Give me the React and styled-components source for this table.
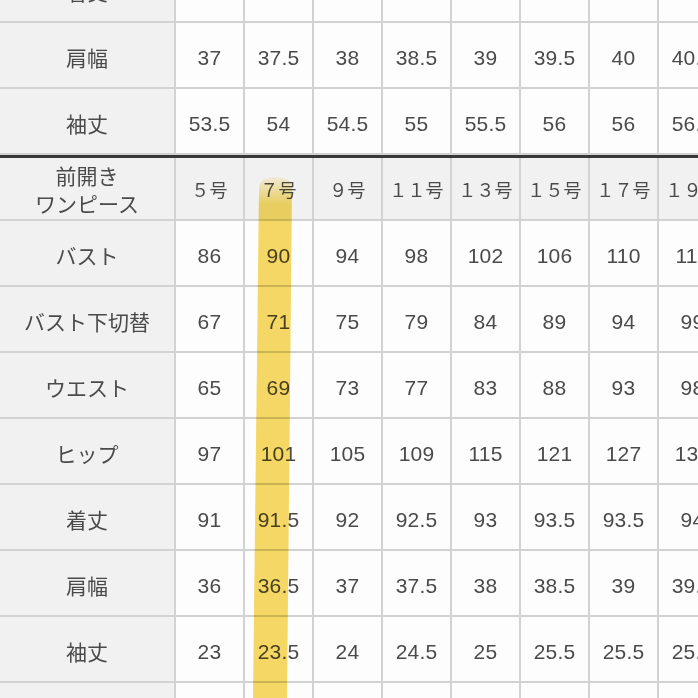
import React from "react";
import styled, { createGlobalStyle } from "styled-components";

const Global = createGlobalStyle`
  html, body { margin: 0; padding: 0; background: #ffffff; }
  body { font-family: "Liberation Sans", "Noto Sans CJK JP", sans-serif; }
`;

const Viewport = styled.div`
  position: relative;
  width: 698px;
  height: 698px;
  overflow: hidden;
  background: #ffffff;
`;

const Table = styled.div`
  display: grid;
  grid-template-columns: 176px repeat(8, 69px);
  margin-top: -43px;
  width: max-content;
`;

const Cell = styled.div`
  box-sizing: border-box;
  height: ${(p) => (p.$head ? "63px" : "66px")};
  border-right: 2px solid #d2d2d2;
  border-bottom: 2px solid #d2d2d2;
  background: ${(p) => (p.$label || p.$head ? "#f1f1f1" : "#fdfdfd")};
  color: #4a4a4a;
  display: flex;
  align-items: center;
  justify-content: center;
  text-align: center;
  padding-top: ${(p) => (p.$head ? "0" : "4px")};
  font-family: ${(p) =>
    p.$label || p.$head
      ? `"Noto Sans CJK JP", "Liberation Sans", sans-serif`
      : `"Liberation Sans", "Noto Sans CJK JP", sans-serif`};
  font-size: ${(p) => (p.$head && !p.$label ? "18px" : "21px")};
  line-height: ${(p) => (p.$head ? "28px" : "1")};
  letter-spacing: ${(p) => (p.$label ? "0" : "0.2px")};
  white-space: pre-line;
`;

const Divider = styled.div`
  grid-column: 1 / -1;
  height: 3px;
  background: #383838;
`;

const Marker = styled.svg`
  position: absolute;
  left: 0;
  top: 0;
  width: 698px;
  height: 698px;
  pointer-events: none;
  mix-blend-mode: multiply;
`;

const jacket = [
  ["着丈", ["60", "60.5", "61", "61.5", "62", "62.5", "63", "63"]],
  ["肩幅", ["37", "37.5", "38", "38.5", "39", "39.5", "40", "40.5"]],
  ["袖丈", ["53.5", "54", "54.5", "55", "55.5", "56", "56", "56.5"]],
];

const dressHead = ["前開き\nワンピース", ["５号", "７号", "９号", "１１号", "１３号", "１５号", "１７号", "１９号"]];

const dress = [
  ["バスト", ["86", "90", "94", "98", "102", "106", "110", "114"]],
  ["バスト下切替", ["67", "71", "75", "79", "84", "89", "94", "99"]],
  ["ウエスト", ["65", "69", "73", "77", "83", "88", "93", "98"]],
  ["ヒップ", ["97", "101", "105", "109", "115", "121", "127", "133"]],
  ["着丈", ["91", "91.5", "92", "92.5", "93", "93.5", "93.5", "94"]],
  ["肩幅", ["36", "36.5", "37", "37.5", "38", "38.5", "39", "39.5"]],
  ["袖丈", ["23", "23.5", "24", "24.5", "25", "25.5", "25.5", "25.5"]],
  ["", ["", "", "", "", "", "", "", ""]],
];

function Row({ label, values, head }) {
  return (
    <>
      <Cell $label $head={head}>{label}</Cell>
      {values.map((v, i) => (
        <Cell key={i} $head={head}>{v}</Cell>
      ))}
    </>
  );
}

export default function App() {
  return (
    <>
      <Global />
      <Viewport>
        <Table>
          {jacket.map(([l, v]) => (
            <Row key={"j" + l} label={l} values={v} />
          ))}
          <Divider />
          <Row label={dressHead[0]} values={dressHead[1]} head />
          {dress.map(([l, v], i) => (
            <Row key={"d" + i} label={l} values={v} />
          ))}
        </Table>
        <Marker viewBox="0 0 698 698">
          <defs>
            <linearGradient id="fade" x1="0" y1="176" x2="0" y2="204" gradientUnits="userSpaceOnUse">
              <stop offset="0" stopColor="#f6d965" stopOpacity="0.15" />
              <stop offset="1" stopColor="#f6d965" stopOpacity="1" />
            </linearGradient>
          </defs>
          <path
            d="M259,188 Q260,177 275,177 Q291,177 292,188 L287,698 L253,698 Z"
            fill="url(#fade)"
          />
        </Marker>
      </Viewport>
    </>
  );
}
